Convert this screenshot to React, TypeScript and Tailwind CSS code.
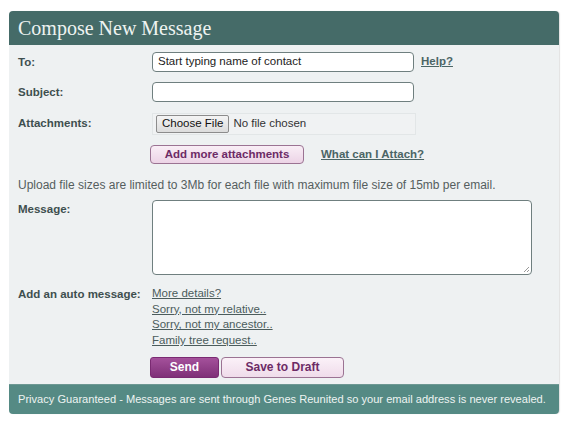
export default function App() {
  const links = [
    "More details?",
    "Sorry, not my relative..",
    "Sorry, not my ancestor..",
    "Family tree request..",
  ];

  return (
    <div className="h-[424px] w-[567px] bg-white pl-[9px] pt-[11px] font-['Liberation_Sans',Arial,sans-serif] text-[12px]">
      <div className="w-[550px] overflow-hidden rounded-[4px] bg-[#eef1f2] shadow-[1px_0_1px_rgba(0,0,0,0.12)]">
        <div className="flex h-[34px] items-center bg-[#456b68] pl-[9px] font-['Liberation_Serif',Georgia,serif] text-[20px] text-[#eef3f1]">
          Compose New Message
        </div>

        <div className="px-[9px] pt-[7px] text-[11.5px] text-[#3e4f4f]">
          {/* To */}
          <div className="flex items-start">
            <div className="w-[134px] pt-[2px] font-bold">To:</div>
            <div className="flex h-[20px] w-[262px] items-center rounded-[4px] border border-[#6f7f7f] bg-white pl-[5px] text-[11.5px] text-[#222]">
              Start typing name of contact
            </div>
            <a className="ml-[7px] pt-[1px] font-bold text-[#4b6565] underline">Help?</a>
          </div>

          {/* Subject */}
          <div className="mt-[10px] flex items-start">
            <div className="w-[134px] pt-[2px] font-bold">Subject:</div>
            <div className="h-[20px] w-[262px] rounded-[4px] border border-[#6f7f7f] bg-white" />
          </div>

          {/* Attachments */}
          <div className="mt-[11px] flex items-start">
            <div className="w-[134px] pt-[2px] font-bold">Attachments:</div>
            <div className="flex h-[22px] w-[264px] items-center border border-[#e2e6e7] bg-[#f0f2f3] pl-[3px] text-[11.5px] text-[#333]">
              <span className="flex h-[18px] items-center rounded-[2px] border border-[#8c8c8c] bg-gradient-to-b from-[#f4f4f4] to-[#dcdcdc] px-[5px] text-[#111]">
                Choose File
              </span>
              <span className="ml-[4px]">No file chosen</span>
            </div>
          </div>

          <div className="mt-[10px] flex items-center pl-[132px]">
            <span className="flex h-[19px] w-[154px] items-center justify-center rounded-[4px] border border-[#9b7393] bg-gradient-to-b from-[#f9eef6] to-[#ecd4e6] font-bold text-[#6d2b66]">
              Add more attachments
            </span>
            <a className="ml-[17px] font-bold text-[#4b6565] underline">What can I Attach?</a>
          </div>

          <div className="mt-[12px] text-[12px] text-[#555e5e]">
            Upload file sizes are limited to 3Mb for each file with maximum file size of 15mb per email.
          </div>

          {/* Message */}
          <div className="mt-[6px] flex items-start">
            <div className="w-[134px] pt-[1px] font-bold">Message:</div>
            <div className="relative h-[75px] w-[380px] rounded-[4px] border border-[#6f7f7f] bg-white">
              <svg className="absolute bottom-[1px] right-[1px]" width="8" height="8" viewBox="0 0 8 8">
                <path d="M7 2 L2 7 M7 5 L5 7" stroke="#999" strokeWidth="1" />
              </svg>
            </div>
          </div>

          {/* Auto message */}
          <div className="mt-[11px] flex items-start">
            <div className="w-[134px] font-bold">Add an auto message:</div>
            <div className="flex flex-col leading-[15.7px]">
              {links.map((l) => (
                <a key={l} className="text-[#4b5c5c] underline">
                  {l}
                </a>
              ))}
            </div>
          </div>

          <div className="mt-[8px] flex pb-[6px] pl-[132px]">
            <span className="flex h-[21px] w-[69px] items-center justify-center rounded-[3px] border border-[#7a2a72] bg-gradient-to-b from-[#a4519b] to-[#7f3078] text-[12px] font-bold text-white">
              Send
            </span>
            <span className="ml-[2px] flex h-[21px] w-[123px] items-center justify-center rounded-[4px] border border-[#9b7393] bg-gradient-to-b from-[#fbf1f8] to-[#efdcea] text-[12px] font-bold text-[#6d2b66]">
              Save to Draft
            </span>
          </div>
        </div>

        <div className="flex h-[30px] items-center whitespace-nowrap border-t border-[#6d9893] bg-[#558a84] pl-[9px] text-[11.1px] text-[#eef4f2]">
          Privacy Guaranteed - Messages are sent through Genes Reunited so your email address is never revealed.
        </div>
      </div>
    </div>
  );
}
